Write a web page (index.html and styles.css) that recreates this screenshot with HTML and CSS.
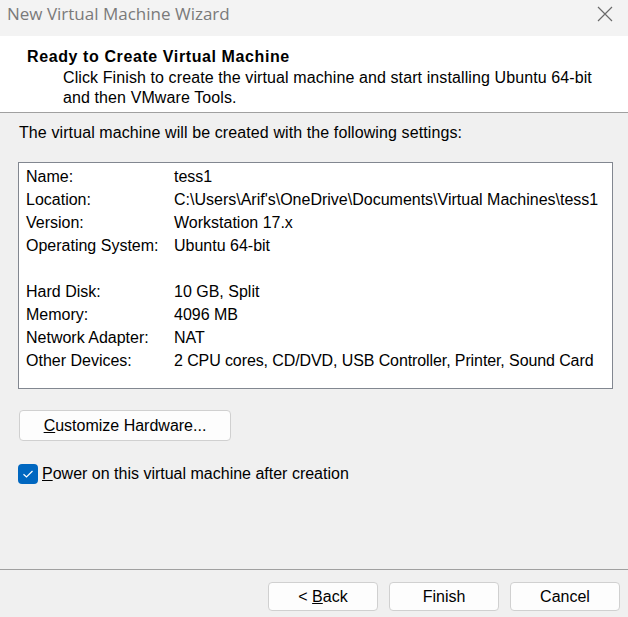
FILE: index.html
```html
<!DOCTYPE html>
<html>
<head>
<meta charset="utf-8">
<link rel="stylesheet" href="styles.css">
</head>
<body>
<div class="window">
  <div class="titlebar">
    <span class="title">New Virtual Machine Wizard</span>
    <svg class="close" width="16" height="16" viewBox="0 0 16 16"><path d="M1 1 L15 15 M15 1 L1 15" stroke="#6a6a6a" stroke-width="1.2" fill="none"/></svg>
  </div>
  <div class="header">
    <div class="h-title">Ready to Create Virtual Machine</div>
    <div class="h-sub">Click Finish to create the virtual machine and start installing Ubuntu 64-bit and then VMware Tools.</div>
  </div>
  <div class="content">
    <div class="intro">The virtual machine will be created with the following settings:</div>
    <div class="settings">
      <div class="row"><span class="lbl">Name:</span><span>tess1</span></div>
      <div class="row"><span class="lbl">Location:</span><span>C:\Users\Arif's\OneDrive\Documents\Virtual Machines\tess1</span></div>
      <div class="row"><span class="lbl">Version:</span><span>Workstation 17.x</span></div>
      <div class="row"><span class="lbl">Operating System:</span><span>Ubuntu 64-bit</span></div>
      <div class="row blank"></div>
      <div class="row"><span class="lbl">Hard Disk:</span><span>10 GB, Split</span></div>
      <div class="row"><span class="lbl">Memory:</span><span>4096 MB</span></div>
      <div class="row"><span class="lbl">Network Adapter:</span><span>NAT</span></div>
      <div class="row"><span class="lbl">Other Devices:</span><span class="tight">2 CPU cores, CD/DVD, USB Controller, Printer, Sound Card</span></div>
    </div>
    <button class="btn custom"><u>C</u>ustomize Hardware...</button>
    <label class="check">
      <span class="box"><svg width="12" height="10" viewBox="0 0 12 10"><path d="M1.5 5.2 L4.5 8 L10.5 2" stroke="#fff" stroke-width="1.2" fill="none"/></svg></span>
      <span><u>P</u>ower on this virtual machine after creation</span>
    </label>
  </div>
  <div class="footer">
    <button class="btn">&lt; <u>B</u>ack</button>
    <button class="btn">Finish</button>
    <button class="btn">Cancel</button>
  </div>
</div>
</body>
</html>
```

FILE: styles.css
```css
html, body {
  margin: 0;
  padding: 0;
  background: #f0f0f0;
}
.window {
  width: 628px;
  height: 617px;
  display: flex;
  flex-direction: column;
  font-family: "Liberation Sans", Arial, sans-serif;
  font-size: 16px;
  color: #000;
  background: #f0f0f0;
  overflow: hidden;
}
.titlebar {
  height: 36px;
  background: #f3f3f3;
  display: flex;
  align-items: flex-start;
  justify-content: space-between;
  padding: 0 15px 0 7px;
}
.title {
  font-family: "Open Sans", "Noto Sans", sans-serif;
  font-size: 17px;
  color: #7a7a7a;
  line-height: 28px;
}
.close {
  margin-top: 6px;
}
.header {
  background: #fff;
  height: 77px;
  border-bottom: 1px solid #a0a0a0;
  padding: 9px 0 0 27px;
  box-sizing: border-box;
}
.h-title {
  font-weight: bold;
  line-height: 23px;
  letter-spacing: 0.6px;
}
.h-sub {
  padding-left: 36px;
  line-height: 20px;
  width: 535px;
  letter-spacing: 0.1px;
}
.content {
  flex: 1;
  padding: 8px 15px 0 18px;
  border-bottom: 1px solid #a0a0a0;
}
.intro {
  line-height: 24px;
  padding-left: 1px;
  letter-spacing: 0.1px;
}
.settings {
  margin-top: 17px;
  height: 227px;
  box-sizing: border-box;
  background: #fff;
  border: 1px solid #828790;
  padding: 2px 0 0 7px;
}
.row {
  display: flex;
  height: 23px;
  line-height: 23px;
}
.lbl {
  width: 148px;
  flex: none;
}
.tight {
  letter-spacing: -0.1px;
}
.btn {
  font-family: "Liberation Sans", Arial, sans-serif;
  font-size: 16px;
  color: #000;
  background: #fdfdfd;
  border: 1px solid #d0d0d0;
  border-radius: 4px;
  width: 110px;
  height: 29px;
  padding: 0;
}
.custom {
  margin: 21px 0 0 1px;
  width: 212px;
  height: 31px;
  display: block;
}
.check {
  display: flex;
  align-items: center;
  margin-top: 22px;
  line-height: 22px;
}
.box {
  width: 20px;
  height: 20px;
  border-radius: 4px;
  background: #0067c0;
  display: flex;
  align-items: center;
  justify-content: center;
  margin-right: 4px;
}
.footer {
  height: 47px;
  flex: none;
  display: flex;
  justify-content: flex-end;
  gap: 11px;
  padding: 12px 8px 0 0;
  box-sizing: border-box;
}
```
